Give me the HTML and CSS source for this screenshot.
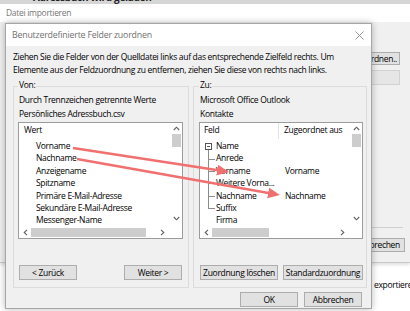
FILE: index.html
```html
<!DOCTYPE html>
<html lang="de">
<head>
    <meta charset="UTF-8">
    <title>Benutzerdefinierte Felder zuordnen</title>
    <link rel="stylesheet" href="styles.css">
</head>
<body>
    <div class="topbar"><span class="topbar-text">Adressbuch wird geladen</span></div>

    <div class="outer">
        <div class="outer-title">Datei importieren</div>
        <div class="outer-body">
            <button class="btn btn-map">Felder zuordnen..</button>
            <div class="outer-field"></div>
            <div class="outer-sep"></div>
            <button class="btn btn-outer-cancel">Abbrechen</button>
        </div>
    </div>
    <div class="below">exportieren</div>

    <div class="dialog">
        <div class="dlg-title">
            <span>Benutzerdefinierte Felder zuordnen</span>
            <svg class="close" width="9" height="9" viewBox="0 0 9 9">
                <path d="M0.5 0.5 L8.5 8.5 M8.5 0.5 L0.5 8.5" stroke="#8a8a8a" stroke-width="0.9" fill="none"/>
            </svg>
        </div>

        <div class="dlg-body">
            <p class="hint">Ziehen Sie die Felder von der Quelldatei links auf das entsprechende Zielfeld rechts. Um<br>Elemente aus der Feldzuordnung zu entfernen, ziehen Sie diese von rechts nach links.</p>

            <div class="groups">
                <!-- Quelle -->
                <div class="group group-from">
                    <div class="group-label">Von:</div>
                    <div class="group-info">Durch Trennzeichen getrennte Werte<br>Persönliches Adressbuch.csv</div>
                    <div class="list">
                        <div class="list-main">
                            <div class="list-head"><span class="head-cell">Wert</span></div>
                            <div class="rows rows-src">
                                <div class="row">Vorname</div>
                                <div class="row">Nachname</div>
                                <div class="row">Anzeigename</div>
                                <div class="row">Spitzname</div>
                                <div class="row">Primäre E-Mail-Adresse</div>
                                <div class="row">Sekundäre E-Mail-Adresse</div>
                                <div class="row">Messenger-Name</div>
                            </div>
                        </div>
                        <div class="vscroll">
                            <svg class="chev" width="7" height="5" viewBox="0 0 7 5"><path d="M0.8 4 L3.5 1.2 L6.2 4" /></svg>
                            <div class="vthumb"></div>
                            <svg class="chev chev-down" width="7" height="5" viewBox="0 0 7 5"><path d="M0.8 1 L3.5 3.8 L6.2 1" /></svg>
                        </div>
                        <div class="hscroll">
                            <svg class="chev" width="5" height="7" viewBox="0 0 5 7"><path d="M4 0.8 L1.2 3.5 L4 6.2" /></svg>
                            <div class="hthumb hthumb-src"></div>
                            <svg class="chev" width="5" height="7" viewBox="0 0 5 7"><path d="M1 0.8 L3.8 3.5 L1 6.2" /></svg>
                        </div>
                        <div class="corner"></div>
                    </div>
                    <div class="group-buttons">
                        <button class="btn btn-small">&lt; Zurück</button>
                        <button class="btn btn-small">Weiter &gt;</button>
                    </div>
                </div>

                <!-- Ziel -->
                <div class="group group-to">
                    <div class="group-label">Zu:</div>
                    <div class="group-info">Microsoft Office Outlook<br>Kontakte</div>
                    <div class="list">
                        <div class="list-main">
                            <div class="list-head">
                                <span class="head-cell head-field">Feld</span>
                                <span class="head-cell head-map">Zugeordnet aus</span>
                            </div>
                            <div class="rows">
                                <div class="row trow"><span class="f f-parent"><span class="minus"></span>Name</span><span class="m"></span></div>
                                <div class="row trow"><span class="f f-child">Anrede</span><span class="m"></span></div>
                                <div class="row trow"><span class="f f-child">Vorname</span><span class="m">Vorname</span></div>
                                <div class="row trow"><span class="f f-child">Weitere Vorna...</span><span class="m"></span></div>
                                <div class="row trow"><span class="f f-child">Nachname</span><span class="m">Nachname</span></div>
                                <div class="row trow"><span class="f f-child f-last">Suffix</span><span class="m"></span></div>
                                <div class="row trow"><span class="f f-top">Firma</span><span class="m"></span></div>
                            </div>
                        </div>
                        <div class="vscroll">
                            <svg class="chev" width="7" height="5" viewBox="0 0 7 5"><path d="M0.8 4 L3.5 1.2 L6.2 4" /></svg>
                            <div class="vthumb"></div>
                            <svg class="chev chev-down" width="7" height="5" viewBox="0 0 7 5"><path d="M0.8 1 L3.5 3.8 L6.2 1" /></svg>
                        </div>
                        <div class="hscroll">
                            <svg class="chev" width="5" height="7" viewBox="0 0 5 7"><path d="M4 0.8 L1.2 3.5 L4 6.2" /></svg>
                            <div class="hthumb hthumb-dst"></div>
                            <svg class="chev" width="5" height="7" viewBox="0 0 5 7"><path d="M1 0.8 L3.8 3.5 L1 6.2" /></svg>
                        </div>
                        <div class="corner"></div>
                    </div>
                    <div class="group-buttons">
                        <button class="btn btn-clear">Zuordnung löschen</button>
                        <button class="btn btn-default">Standardzuordnung</button>
                    </div>
                </div>
            </div>

            <div class="dlg-buttons">
                <button class="btn btn-small">OK</button>
                <button class="btn btn-small">Abbrechen</button>
            </div>
        </div>
    </div>

    <!-- Zuordnungspfeile über der Liste -->
    <svg class="arrows" width="410" height="311" viewBox="0 0 410 311">
        <defs>
            <marker id="head" markerUnits="userSpaceOnUse" markerWidth="14" markerHeight="12" refX="6" refY="5.5" orient="auto">
                <path d="M0 0 L12 5.5 L0 11 Z" fill="#f07070"/>
            </marker>
        </defs>
        <line x1="73" y1="148" x2="223" y2="171" stroke="#f07070" stroke-width="2.5" marker-end="url(#head)"/>
        <line x1="77" y1="159" x2="274" y2="194" stroke="#f07070" stroke-width="2.5" marker-end="url(#head)"/>
    </svg>
</body>
</html>
```

FILE: styles.css
```css
html, body {
    margin: 0;
    padding: 0;
}

body {
    width: 410px;
    height: 311px;
    overflow: hidden;
    position: relative;
    background: #fff;
    color: #000;
    font-family: "Open Sans", sans-serif;
    font-size: 8.5px;
    letter-spacing: -0.3px;
}

.topbar {
    height: 4px;
    background: #d6d6d6;
    overflow: hidden;
}

.topbar-text {
    display: block;
    margin: -9px 0 0 33px;
    font-size: 10px;
    font-weight: bold;
    line-height: 12px;
    color: #222;
}

/* window behind the dialog */
.outer {
    height: 258px;
    display: flex;
    flex-direction: column;
    border-bottom: 1px solid #c9c9c9;
    box-shadow: 0 2px 3px rgba(0, 0, 0, 0.12);
}

.outer-title {
    height: 18px;
    line-height: 18px;
    padding-left: 6px;
    color: #777;
    background: #fff;
}

.outer-body {
    flex: 1;
    background: #f0f0f0;
    display: flex;
    flex-direction: column;
    align-items: flex-end;
}

.btn {
    font: inherit;
    letter-spacing: inherit;
    color: #000;
    background: #e1e1e1;
    border: 1px solid #adadad;
    padding: 0;
    height: 15px;
    line-height: 13px;
    white-space: nowrap;
}

.btn-map {
    margin: 30px 10px 0 0;
    height: 13px;
    line-height: 11px;
    width: 90px;
    text-align: right;
    padding-right: 2px;
}

.outer-field {
    margin: 5px 10px 0 0;
    width: 80px;
    height: 15px;
    box-sizing: border-box;
    background: #e6e6e6;
    border: 1px solid #d2d2d2;
}

.outer-sep {
    margin: 142px 7px 0 0;
    width: 60px;
    height: 1px;
    background: #cfcfcf;
}

.btn-outer-cancel {
    margin: 10px 5px 0 0;
    width: 60px;
    height: 14px;
    line-height: 12px;
    text-align: right;
    padding-right: 4px;
}

.below {
    padding: 15px 0 0 374px;
    line-height: 14px;
    white-space: nowrap;
}

/* dialog */
.dialog {
    position: absolute;
    left: 5px;
    top: 23px;
    width: 365px;
    height: 284px;
    border: 1px solid #a6a6a6;
    background: #f0f0f0;
    box-shadow: 0 0 7px rgba(0, 0, 0, 0.28);
    display: flex;
    flex-direction: column;
}

.dlg-title {
    height: 22px;
    background: #fff;
    display: flex;
    align-items: center;
    justify-content: space-between;
    padding: 0 7px 0 6px;
    color: #707070;
    font-size: 8.8px;
    letter-spacing: -0.2px;
}

.dlg-body {
    flex: 1;
    padding: 3.5px 4px 0 7px;
    display: flex;
    flex-direction: column;
}

.hint {
    margin: 0;
    line-height: 13px;
    white-space: nowrap;
}

.groups {
    display: flex;
    gap: 4px;
    margin-top: 10.5px;
}

.group {
    box-sizing: border-box;
    height: 202px;
    border: 1px solid #dcdcdc;
    display: flex;
    flex-direction: column;
}

.group-from {
    width: 176px;
    padding: 0 5px 0 4px;
}

.group-to {
    width: 174px;
    padding: 0 3px 0 5px;
}

.group-label {
    align-self: flex-start;
    margin-top: -9px;
    padding: 0 1px;
    line-height: 13px;
    background: #f0f0f0;
}

.group-info {
    margin-top: 2px;
    padding-left: 1px;
    line-height: 14px;
}

/* list boxes */
.list {
    margin-top: 1px;
    height: 117px;
    box-sizing: border-box;
    border: 1px solid #9c9c9c;
    background: #fff;
    display: grid;
    grid-template-columns: 1fr 11px;
    grid-template-rows: 1fr 12px;
}

.list-main {
    overflow: hidden;
}

.list-head {
    height: 16px;
    display: flex;
}

.head-cell {
    line-height: 14px;
    padding-left: 5px;
}

.head-field {
    width: 79px;
    box-sizing: border-box;
    padding-left: 4px;
    border-right: 1px solid #e3e3e3;
}

.head-map {
    padding-left: 5px;
}

.rows {
    margin-top: 1px;
}

.row {
    height: 12.4px;
    line-height: 12.4px;
    white-space: nowrap;
}

.rows-src .row {
    padding-left: 17px;
}

.trow {
    display: flex;
}

.f {
    width: 79px;
    box-sizing: border-box;
    position: relative;
}

.m {
    padding-left: 6px;
}

.f-parent {
    padding-left: 5px;
    display: flex;
    align-items: center;
}

.minus {
    width: 7px;
    height: 7px;
    box-sizing: border-box;
    border: 1px solid #555;
    margin-right: 4px;
    background: linear-gradient(#555, #555) center / 3px 1px no-repeat;
}

.f-parent::after {
    content: "";
    position: absolute;
    left: 8px;
    top: calc(50% + 3.5px);
    bottom: 0;
    border-left: 1px solid #8c8c8c;
}

.f-child,
.f-top {
    padding-left: 16px;
}

.f-child::before {
    content: "";
    position: absolute;
    left: 8px;
    top: 0;
    width: 6px;
    height: 50%;
    border-left: 1px solid #8c8c8c;
    border-bottom: 1px solid #8c8c8c;
}

.f-child::after {
    content: "";
    position: absolute;
    left: 8px;
    top: 50%;
    bottom: 0;
    border-left: 1px solid #8c8c8c;
}

.f-last::after {
    display: none;
}

/* scroll bars */
.chev path {
    fill: none;
    stroke: #606060;
    stroke-width: 1.1;
}

.vscroll {
    display: flex;
    flex-direction: column;
    align-items: center;
    padding-top: 3px;
}

.vthumb {
    width: 9px;
    height: 13px;
    margin-top: 3px;
    background: #cdcdcd;
}

.chev-down {
    margin-top: auto;
    margin-bottom: 5px;
}

.hscroll {
    display: flex;
    align-items: center;
    padding: 0 6px 0 4px;
}

.hthumb {
    height: 9px;
    margin-left: 3px;
    background: #cdcdcd;
}

.hthumb-src {
    width: 115px;
    margin-right: auto;
}

.hthumb-dst {
    width: 57px;
    margin-right: auto;
}

.group-buttons {
    margin-top: 26px;
    display: flex;
    justify-content: space-between;
    padding: 0 1px;
}

.btn-small {
    width: 58px;
}

.btn-clear {
    width: 78px;
}

.btn-default {
    width: 80px;
}

.group-to .group-buttons {
    padding: 0 0 0 1px;
}

.dlg-buttons {
    margin: 4px 5px 0 0;
    display: flex;
    justify-content: flex-end;
    gap: 6px;
}

.arrows {
    position: absolute;
    left: 0;
    top: 0;
    pointer-events: none;
}
```
